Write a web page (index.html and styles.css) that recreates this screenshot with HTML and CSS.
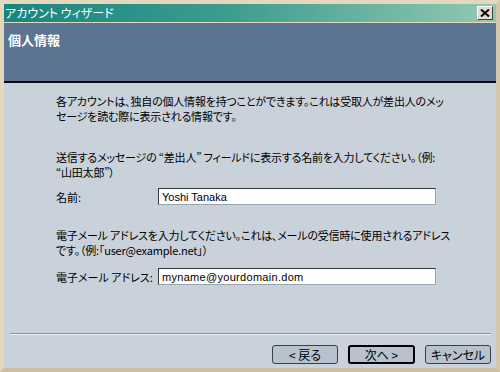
FILE: index.html
```html
<!DOCTYPE html>
<html lang="ja">
<head>
  <meta charset="UTF-8">
  <title>アカウント ウィザード</title>
  <link rel="stylesheet" href="styles.css">
</head>
<body>
  <div class="window">
    <div class="titlebar">
      <span class="title">アカウント ウィザード</span>
      <button class="close" type="button" aria-label="閉じる">
        <svg width="10" height="8" viewBox="0 0 10 8">
          <path d="M1 0.5 L9 7.5 M9 0.5 L1 7.5" stroke="#000" stroke-width="2" fill="none"/>
        </svg>
      </button>
    </div>

    <div class="banner">
      <h1>個人情報</h1>
    </div>

    <div class="content">
      <p class="intro">各アカウントは、独自の個人情報を持つことができます。これは受取人が差出人のメッ<br>セージを読む際に表示される情報です。</p>

      <p class="hint">送信するメッセージの “差出人” フィールドに表示する名前を入力してください。（例:<br>“山田太郎”）</p>
      <div class="field">
        <label for="full-name">名前:</label>
        <input type="text" id="full-name" class="name-input" value="Yoshi Tanaka">
      </div>

      <p class="hint hint-email">電子メール アドレスを入力してください。これは、メールの受信時に使用されるアドレス<br>です。（例:「user@example.net」）</p>
      <div class="field field-email">
        <label for="email">電子メール アドレス:</label>
        <input type="text" id="email" class="email-input" value="myname@yourdomain.dom">
      </div>
    </div>

    <div class="footer">
      <div class="separator"></div>
      <div class="buttons">
        <button type="button" class="btn">&lt; 戻る</button>
        <button type="button" class="btn btn-default">次へ &gt;</button>
        <button type="button" class="btn">キャンセル</button>
      </div>
    </div>
  </div>
</body>
</html>
```

FILE: styles.css
```css
html, body {
  margin: 0;
  padding: 0;
}

body {
  font-family: "Noto Sans CJK JP", "Liberation Sans", sans-serif;
  font-size: 11px;
  font-feature-settings: "palt";
  color: #000;
}

.window {
  width: 500px;
  height: 372px;
  box-sizing: border-box;
  display: flex;
  flex-direction: column;
  background-color: #e2d8c0;
  border: 4px solid #e2d8c0;
  border-right-color: #d4c8ac;
  border-bottom-color: #cbbf9f;
}

.titlebar {
  height: 18px;
  display: flex;
  align-items: center;
  justify-content: space-between;
  padding: 0 3px 0 1px;
  background: linear-gradient(90deg, #17867f, #3c9c8e 45%, #92c9b2);
  color: #fff;
}

.title {
  font-size: 12px;
  line-height: 18px;
}

.close {
  width: 16px;
  height: 14px;
  padding: 0;
  display: flex;
  align-items: center;
  justify-content: center;
  background-color: #e4dcc6;
  border: 1px solid;
  border-color: #fff #404040 #404040 #fff;
}

.banner {
  height: 58px;
  margin-top: 1px;
  background-color: #5b7492;
  border-bottom: 2px solid #0a0a10;
  box-sizing: content-box;
}

.banner h1 {
  margin: 0;
  padding: 8px 0 0 4px;
  font-size: 13px;
  font-weight: bold;
  color: #fff;
  line-height: 18px;
}

.content {
  flex: 1;
  background-color: #c9d1da;
  padding: 11px 0 0 52px;
}

.content p {
  margin: 0;
  line-height: 15px;
  white-space: nowrap;
  letter-spacing: -0.2px;
}

.hint {
  margin-top: 26px !important;
}

.hint-email {
  margin-top: 23px !important;
}

.field {
  display: flex;
  align-items: center;
  margin-top: 8px;
}

.field-email {
  margin-top: 10px;
}

.field label {
  width: 102px;
  white-space: nowrap;
}

.field input {
  width: 278px;
  height: 17px;
  box-sizing: border-box;
  padding: 0 3px;
  background-color: #fff;
  border: 1px solid;
  border-color: #303840 #9aa4b0 #9aa4b0 #303840;
  color: #000;
  font-family: "Liberation Sans", sans-serif;
  font-size: 11px;
}

.email-input {
  letter-spacing: 0.3px;
}

.footer {
  background-color: #c9d1da;
  padding: 0 5px 4px 6px;
}

.separator {
  height: 1px;
  background-color: #8894a2;
  border-bottom: 1px solid #eef1f4;
  margin-bottom: 10px;
}

.buttons {
  display: flex;
  justify-content: flex-end;
  gap: 10px;
}

.btn {
  width: 66px;
  height: 19px;
  padding: 0;
  font-family: inherit;
  font-size: 12px;
  font-feature-settings: "palt";
  background-color: #b7c2ce;
  border: 1px solid #384048;
  border-radius: 3px;
  color: #000;
  line-height: 15px;
}

.btn-default {
  border: 2px solid #000;
  width: 67px;
}
```
